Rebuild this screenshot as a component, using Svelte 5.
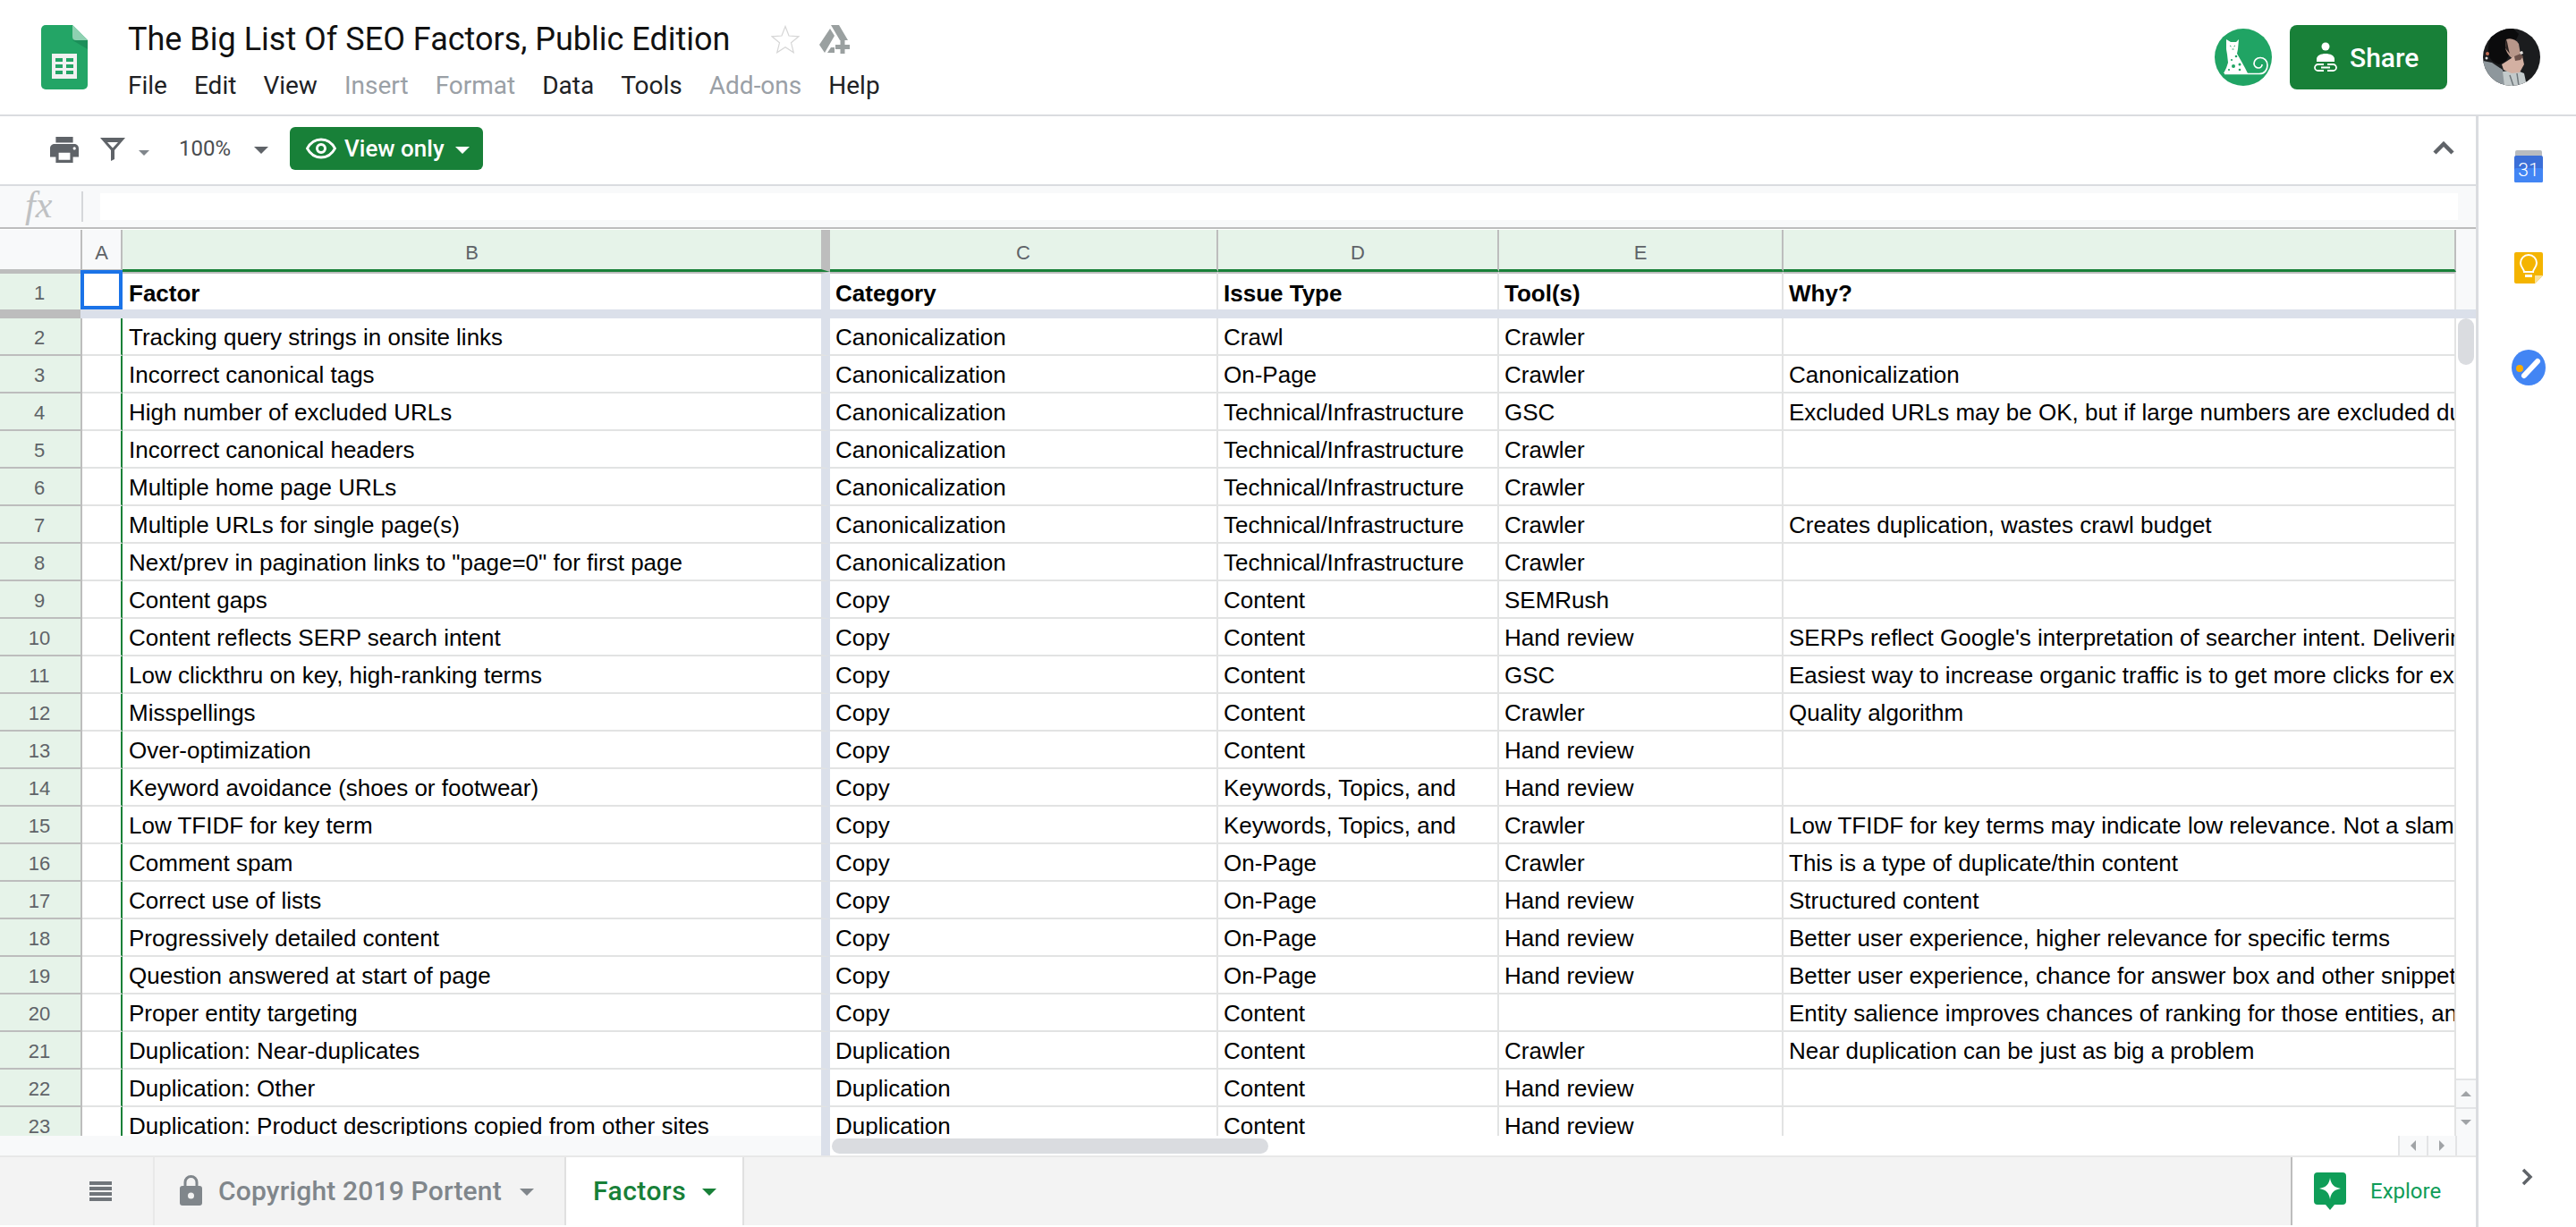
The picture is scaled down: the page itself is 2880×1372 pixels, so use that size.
<script>
	const menu = [
		['File'], ['Edit'], ['View'], ['Insert', true], ['Format', true],
		['Data'], ['Tools'], ['Add-ons', true], ['Help']
	];

	const rows = [
		['Tracking query strings in onsite links', 'Canonicalization', 'Crawl', 'Crawler', ''],
		['Incorrect canonical tags', 'Canonicalization', 'On-Page', 'Crawler', 'Canonicalization'],
		['High number of excluded URLs', 'Canonicalization', 'Technical/Infrastructure', 'GSC', 'Excluded URLs may be OK, but if large numbers are excluded due to errors'],
		['Incorrect canonical headers', 'Canonicalization', 'Technical/Infrastructure', 'Crawler', ''],
		['Multiple home page URLs', 'Canonicalization', 'Technical/Infrastructure', 'Crawler', ''],
		['Multiple URLs for single page(s)', 'Canonicalization', 'Technical/Infrastructure', 'Crawler', 'Creates duplication, wastes crawl budget'],
		['Next/prev in pagination links to "page=0" for first page', 'Canonicalization', 'Technical/Infrastructure', 'Crawler', ''],
		['Content gaps', 'Copy', 'Content', 'SEMRush', ''],
		['Content reflects SERP search intent', 'Copy', 'Content', 'Hand review', "SERPs reflect Google's interpretation of searcher intent. Delivering what they want"],
		['Low clickthru on key, high-ranking terms', 'Copy', 'Content', 'GSC', 'Easiest way to increase organic traffic is to get more clicks for existing rankings'],
		['Misspellings', 'Copy', 'Content', 'Crawler', 'Quality algorithm'],
		['Over-optimization', 'Copy', 'Content', 'Hand review', ''],
		['Keyword avoidance (shoes or footwear)', 'Copy', 'Keywords, Topics, and', 'Hand review', ''],
		['Low TFIDF for key term', 'Copy', 'Keywords, Topics, and', 'Crawler', 'Low TFIDF for key terms may indicate low relevance. Not a slam dunk though'],
		['Comment spam', 'Copy', 'On-Page', 'Crawler', 'This is a type of duplicate/thin content'],
		['Correct use of lists', 'Copy', 'On-Page', 'Hand review', 'Structured content'],
		['Progressively detailed content', 'Copy', 'On-Page', 'Hand review', 'Better user experience, higher relevance for specific terms'],
		['Question answered at start of page', 'Copy', 'On-Page', 'Hand review', 'Better user experience, chance for answer box and other snippets in results'],
		['Proper entity targeting', 'Copy', 'Content', '', 'Entity salience improves chances of ranking for those entities, and related terms'],
		['Duplication: Near-duplicates', 'Duplication', 'Content', 'Crawler', 'Near duplication can be just as big a problem'],
		['Duplication: Other', 'Duplication', 'Content', 'Hand review', ''],
		['Duplication: Product descriptions copied from other sites', 'Duplication', 'Content', 'Hand review', '']
	];
</script>

<div class="app">
	<header class="topbar">
		<svg class="logo" viewBox="0 0 52 72" width="52" height="72">
			<path d="M5 0h30l17 17v50a5 5 0 0 1-5 5H5a5 5 0 0 1-5-5V5a5 5 0 0 1 5-5z" fill="#23a566" />
			<path d="M35 17l17 10V17z" fill="#1c8f5a" />
			<path d="M35 0l17 17H39a4 4 0 0 1-4-4z" fill="#8ed1b1" />
			<path d="M12 32h28v28H12z" fill="#f1f1f1" />
			<path d="M16 37h8v4h-8zM28 37h8v4h-8zM16 44h8v4h-8zM28 44h8v4h-8zM16 51h8v4h-8zM28 51h8v4h-8z" fill="#23a566" />
		</svg>
		<div class="doc">
			<div class="title-row">
				<span class="title">The Big List Of SEO Factors, Public Edition</span>
				<svg class="star" viewBox="0 0 32 32" width="32" height="32">
					<path d="M16 1.500l4 10.500 11 .8-8.500 7 2.800 11L16 24.800 6.700 30.800l2.800-11-8.500-7 11-.8z" fill="none" stroke="#d6d6d6" stroke-width="1.200" />
				</svg>
				<svg class="drive" viewBox="56 8 34 34" width="34" height="34">
					<path d="M68 12L56 30l6 9 11-19zM69 8h9l10 17h-9zM65 39h8v-6h-4zM74 30h5.500v-5h5v5H90v5h-5.500v5h-5v-5H74z" fill="#9aa0a0" />
				</svg>
			</div>
			<nav class="menu">
				{#each menu as [label, off]}
					<span class:off>{label}</span>
				{/each}
			</nav>
		</div>
		<div class="account">
			<svg class="badge" viewBox="0 0 64 64" width="64" height="64">
				<circle cx="32" cy="32" r="32" fill="#20a464" />
				<path d="M13 12l5 3h6l3-3-1 11-1 5 4 7 5 9 3 6H10l3-6 2-6-1-9-1-6z" fill="#fff" />
				<path d="M11 50.500H50c6 0 9-4.500 9-9.500 0-5.500-4-8.500-8-8.500-4.500 0-7 3.500-7 6.500 0 3 2.500 5 5 5 2.500 0 4-2 4-4" fill="none" stroke="#fff" stroke-width="1.700" />
				<circle cx="24" cy="31" r="1.300" fill="#20a464" /><circle cx="19" cy="35" r="1.100" fill="#20a464" />
				<circle cx="28" cy="40" r="1.500" fill="#20a464" /><circle cx="21" cy="42" r="2" fill="#20a464" />
				<circle cx="28" cy="46" r="1.300" fill="#20a464" /><circle cx="16" cy="46" r="1.100" fill="#20a464" />
				<path d="M17 19l1.500 1M23 19l-1.500 1M19.500 23h2" stroke="#20a464" stroke-width="1" />
			</svg>
			<div class="share">
				<svg viewBox="0 0 26 34" width="26" height="34">
					<circle cx="13" cy="5" r="4.500" fill="#fff" />
					<path d="M3 22v-3c0-4 5-6 10-6s10 2 10 6v3z" fill="#fff" />
					<path d="M11 25H4.500a3.500 3.500 0 0 0 0 7H11M15 25h6.500a3.500 3.500 0 0 1 0 7H15M8 28.500h10" fill="none" stroke="#fff" stroke-width="1.800" />
				</svg>
				<span>Share</span>
			</div>
			<svg class="photo" viewBox="0 0 64 64" width="64" height="64">
				<defs><clipPath id="round"><circle cx="32" cy="32" r="32" /></clipPath></defs>
				<g clip-path="url(#round)">
					<rect width="64" height="64" fill="#1b1c1e" />
					<path d="M0 36l10 2 12 8 4 18H0z" fill="#8e979c" />
					<path d="M22 48l14-2 10 4 3 14H24z" fill="#c3cacb" />
					<path d="M30 52l4 12M38 50l2 14" stroke="#6f777b" stroke-width="1.500" />
					<path d="M20 0C10 4 5 14 6 26c1 8 5 12 12 14l8-4 14-30-6-6z" fill="#0b0b0c" />
					<path d="M26 12c5-2 11 0 14 5l2 12c-1 3-3 5-6 5-5 0-9-6-11-12z" fill="#b8978a" />
					<path d="M26 12c2 5 2 10 4 16l-5-6z" fill="#2a2220" />
					<path d="M21 40l14-9 9 0 2 9-5 9-9 1-9-4z" fill="#d3b0a2" />
					<path d="M35 31l7-3 3 3-3 4-6 1z" fill="#6d524b" />
					<path d="M41 26l3-1 1 3-3 1z" fill="#e9e3df" />
					<circle cx="5" cy="28" r="2" fill="#c26d55" /><circle cx="4" cy="33" r="1.500" fill="#e2e2e2" />
				</g>
			</svg>
		</div>
	</header>

	<div class="body">
		<main class="workspace">
			<div class="toolbar">
				<svg class="print" viewBox="2 3 20 18" width="32" height="29">
					<path d="M19 8H5c-1.660 0-3 1.340-3 3v6h4v4h12v-4h4v-6c0-1.660-1.340-3-3-3zm-3 11H8v-5h8v5zm3-7c-.550 0-1-.450-1-1s.450-1 1-1 1 .450 1 1-.450 1-1 1zm-1-9H6v4h12V3z" fill="#5f6368" />
				</svg>
				<svg class="filter" viewBox="0 0 28 26" width="28" height="26">
					<path d="M0 0h28L16 14v10l-4 2V14zM8 5l6 6.500L20 5z" fill="#5f6368" fill-rule="evenodd" />
				</svg>
				<i class="caret small"></i>
				<span class="zoom">100%</span>
				<i class="caret"></i>
				<div class="view-only">
					<svg viewBox="0 0 34 24" width="34" height="24">
						<path d="M1.500 12C5 5.500 11 2 17 2s12 3.500 15.500 10C29 18.500 23 22 17 22S5 18.500 1.500 12z" fill="none" stroke="#fff" stroke-width="2.800" />
						<circle cx="17" cy="12" r="4.500" fill="none" stroke="#fff" stroke-width="3" />
					</svg>
					<span>View only</span>
					<i class="caret white"></i>
				</div>
				<svg class="collapse" viewBox="0 0 24 15" width="24" height="15">
					<path d="M2 13l10-10 10 10" fill="none" stroke="#5f6368" stroke-width="4.500" />
				</svg>
			</div>

			<div class="formula">
				<span class="fx">fx</span>
				<i class="fx-sep"></i>
				<div class="fx-input"></div>
			</div>

			<div class="sheet">
				<div class="grid">
					<div class="row head">
						<div class="cell rh corner"></div>
						<div class="cell a">A</div>
						<div class="cell b">B</div>
						<div class="cell">C</div>
						<div class="cell">D</div>
						<div class="cell">E</div>
						<div class="cell"></div>
					</div>
					<div class="row first">
						<div class="cell rh">1</div>
						<div class="cell a selected"></div>
						<div class="cell b">Factor</div>
						<div class="cell">Category</div>
						<div class="cell">Issue Type</div>
						<div class="cell">Tool(s)</div>
						<div class="cell">Why?</div>
					</div>
					<div class="freeze"></div>
					<div class="rows">
						{#each rows as r, i}
							<div class="row">
								<div class="cell rh">{i + 2}</div>
								<div class="cell a"></div>
								<div class="cell b">{r[0]}</div>
								<div class="cell">{r[1]}</div>
								<div class="cell">{r[2]}</div>
								<div class="cell">{r[3]}</div>
								<div class="cell">{r[4]}</div>
							</div>
						{/each}
					</div>
				</div>
				<div class="vscroll">
					<div class="v-head"></div>
					<div class="v-freeze"></div>
					<div class="v-track"><div class="v-thumb"></div></div>
					<div class="v-btn"><i class="tri up"></i></div>
					<div class="v-btn"><i class="tri down"></i></div>
				</div>
			</div>

			<div class="hscroll">
				<div class="h-left"></div>
				<div class="h-freeze"></div>
				<div class="h-track"><div class="h-thumb"></div></div>
				<div class="h-btn"><i class="tri left"></i></div>
				<div class="h-btn"><i class="tri right"></i></div>
				<div class="h-corner"></div>
			</div>

			<div class="tabbar">
				<div class="all-sheets">
					<svg viewBox="0 0 25 22" width="25" height="22">
						<path d="M0 0h25v4H0zM0 6h25v4H0zM0 12h25v4H0zM0 18h25v4H0z" fill="#70757a" />
					</svg>
				</div>
				<div class="tab">
					<svg viewBox="0 0 25 34" width="25" height="34">
						<path d="M6 13V8a6.500 6.500 0 0 1 13 0v5" fill="none" stroke="#80868b" stroke-width="3" />
						<rect x="0" y="12" width="25" height="22" rx="3" fill="#80868b" />
						<circle cx="12.500" cy="23" r="3.500" fill="#f3f3f3" />
					</svg>
					<span>Copyright 2019 Portent</span>
					<i class="caret tab-caret"></i>
				</div>
				<div class="tab active">
					<span>Factors</span>
					<i class="caret green"></i>
				</div>
				<div class="explore">
					<svg viewBox="0 0 36 42" width="36" height="42">
						<path d="M4 0h28a4 4 0 0 1 4 4v28a4 4 0 0 1-4 4h-9l-5 6-5-6H4a4 4 0 0 1-4-4V4a4 4 0 0 1 4-4z" fill="#0f9d58" />
						<path d="M18 6c1 7 4 10.500 12 12-8 1.500-11 5-12 12-1-7-4-10.500-12-12 8-1.500 11-5 12-12z" fill="#fff" />
					</svg>
					<span>Explore</span>
				</div>
			</div>
		</main>

		<aside class="side">
			<svg class="cal" viewBox="0 0 32 36" width="32" height="36">
				<rect x="1" y="0" width="30" height="10" rx="2" fill="#b8bbbf" />
				<rect x="0" y="6" width="32" height="30" rx="2" fill="#3b6fd8" />
				<rect x="0" y="20" width="32" height="16" rx="2" fill="#4285f4" />
				<text x="16" y="29" text-anchor="middle">31</text>
			</svg>
			<svg class="keep" viewBox="0 0 32 35" width="32" height="35">
				<path d="M2 0h28a2 2 0 0 1 2 2v24l-9 9H2a2 2 0 0 1-2-2V2a2 2 0 0 1 2-2z" fill="#f4b400" />
				<path d="M32 26h-9v9z" fill="#fbe29a" />
				<path d="M11 22c0-3-4-5-4-10a9 9 0 0 1 18 0c0 5-4 7-4 10z" fill="none" stroke="#fff" stroke-width="2" />
				<path d="M12 25h8v3h-8z" fill="#fff" />
			</svg>
			<svg class="tasks" viewBox="0 0 38 40" width="38" height="40">
				<ellipse cx="19" cy="20" rx="19" ry="20" fill="#4285f4" />
				<circle cx="9" cy="21" r="4" fill="#f9ab00" />
				<path d="M14 29L29 13" stroke="#fff" stroke-width="6" stroke-linecap="round" />
			</svg>
			<svg class="expand" viewBox="0 0 14 20" width="14" height="20">
				<path d="M2 2l8 8-8 8" fill="none" stroke="#5f6368" stroke-width="3.500" />
			</svg>
		</aside>
	</div>
</div>

<style>
	:global(body) {
		margin: 0;
		background: #fff;
	}

	.app {
		width: 2880px;
		height: 1372px;
		display: flex;
		flex-direction: column;
		overflow: hidden;
		font-family: Roboto, sans-serif;
		color: #202124;
	}

	i {
		display: block;
		font-style: normal;
	}

	/* top bar */
	.topbar {
		height: 130px;
		box-sizing: border-box;
		flex: none;
		display: flex;
		border-bottom: 2px solid #dadce0;
		padding: 0 40px 0 46px;
	}

	.logo {
		margin-top: 28px;
	}

	.doc {
		margin-left: 45px;
		flex: 1;
	}

	.title-row {
		display: flex;
		align-items: center;
		height: 40px;
		margin-top: 24px;
	}

	.title {
		font-size: 36px;
		line-height: 40px;
		color: #111;
	}

	.star {
		margin-left: 45px;
	}

	.drive {
		margin-left: 22px;
		margin-top: 2px;
	}

	.menu {
		display: flex;
		gap: 30px;
		margin-top: 12px;
		font-size: 28px;
		line-height: 40px;
		color: #202124;
	}

	.menu .off {
		color: #9aa0a6;
	}

	.account {
		display: flex;
		align-items: flex-start;
	}

	.badge {
		margin-top: 32px;
	}

	.share {
		margin: 28px 0 0 20px;
		width: 176px;
		height: 72px;
		box-sizing: border-box;
		padding-left: 27px;
		background: #188038;
		border-radius: 8px;
		display: flex;
		align-items: center;
		gap: 14px;
		color: #fff;
		font-size: 30px;
		font-weight: 500;
	}

	.photo {
		margin: 32px 0 0 40px;
	}

	/* main area */
	.body {
		flex: 1;
		display: flex;
		min-height: 0;
	}

	.workspace {
		width: 2768px;
		flex: none;
		display: flex;
		flex-direction: column;
	}

	.toolbar {
		height: 78px;
		box-sizing: border-box;
		flex: none;
		display: flex;
		align-items: center;
		border-bottom: 2px solid #dadce0;
		padding: 0 24px 4px 56px;
	}

	.print {
		margin-top: 2px;
	}

	.filter {
		margin-left: 24px;
		margin-top: 2px;
	}

	.caret {
		width: 0;
		height: 0;
		border-left: 8px solid transparent;
		border-right: 8px solid transparent;
		border-top: 8px solid #5f6368;
		margin-top: 4px;
	}

	.caret.small {
		border-left-width: 6px;
		border-right-width: 6px;
		border-top-width: 6px;
		border-top-color: #80868b;
		margin: 10px 0 0 15px;
	}

	.zoom {
		margin-left: 33px;
		font-size: 24px;
		font-weight: 400;
		color: #4a4d50;
		width: 84px;
	}

	.view-only {
		margin-left: 24px;
		width: 216px;
		height: 48px;
		box-sizing: border-box;
		padding-left: 18px;
		background: #188038;
		border-radius: 6px;
		display: flex;
		align-items: center;
		color: #fff;
		font-size: 26px;
		font-weight: 500;
	}

	.view-only span {
		margin-left: 9px;
		width: 124px;
	}

	.caret.white {
		border-top-color: #fff;
	}

	.collapse {
		margin-left: auto;
		margin-top: -1px;
	}

	.formula {
		height: 48px;
		box-sizing: border-box;
		flex: none;
		display: flex;
		align-items: center;
		background: #f8f9fa;
		border-bottom: 2px solid #bdbdbd;
		padding-left: 28px;
	}

	.fx {
		font-family: 'Liberation Serif', serif;
		font-style: italic;
		font-size: 42px;
		line-height: 40px;
		color: #bfc1c3;
		width: 63px;
		margin-top: -5px;
	}

	.fx-sep {
		width: 2px;
		height: 34px;
		background: #d5d7da;
	}

	.fx-input {
		margin-left: 19px;
		width: 2636px;
		height: 30px;
		background: #fff;
	}

	/* sheet */
	.sheet {
		flex: none;
		height: 1014px;
		display: flex;
		overflow: hidden;
	}

	.grid {
		width: 2746px;
		flex: none;
		display: flex;
		flex-direction: column;
	}

	.row {
		display: grid;
		grid-template-columns: 92px 45px 791px 434px 314px 318px 752px;
		height: 42px;
		flex: none;
		font-family: 'Liberation Sans', Arial, sans-serif;
		font-size: 26px;
		color: #000;
	}

	.cell {
		box-sizing: border-box;
		position: relative;
		padding: 1px 0 0 6px;
		line-height: 41px;
		white-space: nowrap;
		overflow: hidden;
		border-right: 2px solid #e2e3e3;
		border-bottom: 2px solid #e2e3e3;
	}

	.rh {
		padding: 1px 2px 0 0;
		text-align: center;
		font-size: 22px;
		color: #5f6368;
		background: #e6f3e9;
		border-right-color: #bdbdbd;
		border-bottom-color: #bdbdbd;
	}

	.cell.a {
		padding: 0;
		border-right-color: #188038;
	}

	.cell.b {
		border-right-width: 10px;
		border-right-color: #dbe0ea;
		padding-left: 7px;
	}

	.head {
		height: 48px;
		padding-top: 1px;
		box-sizing: border-box;
		font-size: 22px;
		color: #5f6368;
	}

	.head .cell {
		background: #e6f3e9;
		text-align: center;
		padding: 4px 0 0;
		line-height: 44px;
		border-right-color: #bdbdbd;
		border-bottom: 3px solid #188038;
	}

	.head .corner {
		background: #f8f9fa;
		border-bottom: 3px solid #bdbdbd;
	}

	.head .cell.a {
		background: #f8f9fa;
		border-right-color: #bdbdbd;
		border-bottom-color: #bdbdbd;
	}

	.head .cell.b {
		border-right-color: #bdbdbd;
	}

	.first {
		font-weight: 700;
		height: 42px;
	}

	.first .cell {
		padding-top: 2px;
		border-top: 2px solid #bdbdbd;
		line-height: 40px;
		border-bottom: none;
	}

	.first .rh {
		font-weight: 400;
	}

	.first .selected {
		overflow: visible;
		border-top: none;
		border-right-color: transparent;
	}

	.selected::after {
		content: '';
		position: absolute;
		left: -2px;
		right: -2px;
		top: -2px;
		bottom: 0;
		border: 4px solid #1a73e8;
	}

	.freeze {
		height: 10px;
		flex: none;
		background: linear-gradient(90deg, #bdbdbd 90px, #dbe0ea 90px);
	}

	.rows {
		flex: 1;
		min-height: 0;
		overflow: hidden;
	}

	.vscroll {
		flex: 1;
		display: flex;
		flex-direction: column;
	}

	.v-head {
		height: 90px;
		background: #f8f9fa;
	}

	.v-freeze {
		height: 10px;
		background: #dbe0ea;
	}

	.v-track {
		height: 850px;
		display: flex;
		justify-content: center;
	}

	.v-thumb {
		width: 18px;
		height: 52px;
		border-radius: 9px;
		background: #dadce0;
	}

	.v-btn {
		height: 32px;
		box-sizing: border-box;
		background: #f8f9fa;
		border-top: 2px solid #e3e4e6;
		display: flex;
		align-items: center;
		justify-content: center;
	}

	.tri {
		width: 0;
		height: 0;
		border: 6px solid transparent;
	}

	.tri.up {
		border-top: 0;
		border-bottom: 6px solid #a0a3a6;
	}

	.tri.down {
		border-bottom: 0;
		border-top: 6px solid #a0a3a6;
	}

	.tri.left {
		border-left: 0;
		border-right: 6px solid #a0a3a6;
	}

	.tri.right {
		border-right: 0;
		border-left: 6px solid #a0a3a6;
	}

	.hscroll {
		height: 22px;
		flex: none;
		display: flex;
		background: #fff;
	}

	.h-left {
		width: 918px;
		background: #f8f9fa;
	}

	.h-freeze {
		width: 10px;
		background: #dbe0ea;
	}

	.h-track {
		width: 1753px;
		padding: 3px 0 0 2px;
		box-sizing: border-box;
	}

	.h-thumb {
		width: 488px;
		height: 17px;
		border-radius: 9px;
		background: #dadce0;
	}

	.h-btn {
		width: 32px;
		background: #f8f9fa;
		border-left: 2px solid #e3e4e6;
		box-sizing: border-box;
		display: flex;
		align-items: center;
		justify-content: center;
	}

	.h-corner {
		flex: 1;
		background: #f8f9fa;
		border-left: 2px solid #e3e4e6;
	}

	/* tabs */
	.tabbar {
		flex: 1;
		display: flex;
		background: #f3f3f3;
		border-top: 2px solid #e8e8e8;
		margin-bottom: 2px;
	}

	.all-sheets {
		width: 171px;
		box-sizing: border-box;
		padding: 27px 0 0 100px;
	}

	.all-sheets svg {
		display: block;
	}

	.tab {
		display: flex;
		align-items: center;
		box-sizing: border-box;
		width: 460px;
		padding: 0 0 2px 28px;
		border-left: 2px solid #e8e8e8;
		font-size: 30px;
		letter-spacing: 0.17px;
		font-weight: 500;
		color: #80868b;
		gap: 18px;
	}

	.caret.tab-caret {
		border-left-width: 8px;
		border-right-width: 8px;
		margin-left: 2px;
		border-top-color: #80868b;
	}

	.tab.active {
		width: 201px;
		padding-left: 30px;
		gap: 18px;
		letter-spacing: 0.5px;
		background: #fff;
		color: #188038;
		border-left: 2px solid #e0e0e0;
		border-right: 2px solid #e0e0e0;
	}

	.caret.green {
		border-left-width: 8px;
		border-right-width: 8px;
		border-top-color: #188038;
	}

	.explore {
		margin-left: auto;
		width: 207px;
		box-sizing: border-box;
		background: #fff;
		border-left: 2px solid #bdbdbd;
		display: flex;
		align-items: center;
		padding-left: 24px;
		gap: 27px;
		color: #0f9d58;
		font-size: 24px;
	}

	/* side panel */
	.side {
		flex: 1;
		box-sizing: border-box;
		border-left: 3px solid #dadce0;
		display: flex;
		flex-direction: column;
		align-items: center;
		padding: 38px 0 46px;
	}

	.cal {
		margin-left: 2px;
	}

	.cal text {
		fill: #fff;
		font-family: Roboto, sans-serif;
		font-size: 21px;
		font-weight: 300;
	}

	.keep {
		margin: 78px 0 0 2px;
	}

	.tasks {
		margin: 74px 0 0 2px;
	}

	.expand {
		margin-top: auto;
	}
</style>
